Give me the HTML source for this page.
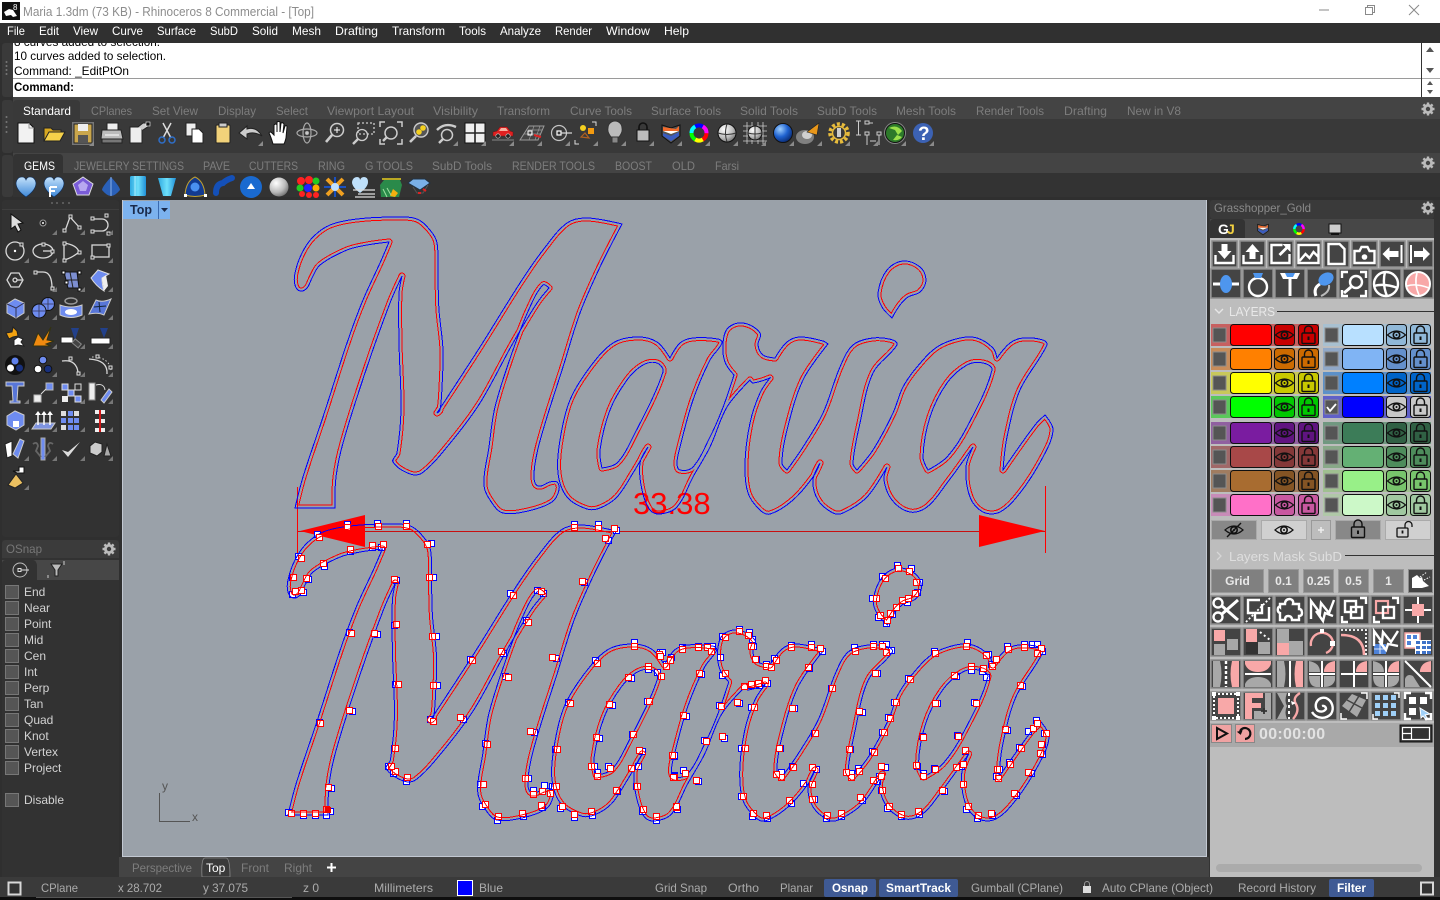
<!DOCTYPE html>
<html lang="en"><head><meta charset="utf-8"><title>Maria 1.3dm - Rhinoceros 8</title>
<style>
html,body{margin:0;padding:0;background:#2f2f2f;overflow:hidden;width:1440px;height:900px}
svg{display:block;font-family:"Liberation Sans",Arial,sans-serif;font-size:12px}
.mn{fill:#fff}.ti{fill:#7d7d7d}.ta{fill:#fff}.st{fill:#ababab}.os{fill:#d2d2d2}
.l{fill:none;stroke:#d8d8d8;stroke-width:1.3}
.w{fill:none;stroke:#fff;stroke-width:2.4}
.w3{fill:none;stroke:#fff;stroke-width:3}
.n{fill:#333;stroke:#ddd;stroke-width:1}
.nb{fill:#fff;stroke:#111;stroke-width:1}
.bl{fill:#6e8cf0;stroke:#111;stroke-width:1}
.pk{fill:#f8a8a8}.gr{fill:#a8a8a8}
.crisp{shape-rendering:crispEdges}
</style></head><body>
<svg xmlns="http://www.w3.org/2000/svg" width="1440" height="900" viewBox="0 0 1440 900">
<defs>
<marker id="mb" markerUnits="userSpaceOnUse" markerWidth="8" markerHeight="8" refX="4" refY="4"><rect x=".5" y=".5" width="6" height="6" fill="#fff" stroke="#00f" shape-rendering="crispEdges"/></marker>
<marker id="mr" markerUnits="userSpaceOnUse" markerWidth="8" markerHeight="8" refX="4" refY="4"><rect x=".5" y=".5" width="6" height="6" fill="#fff" stroke="#f00" shape-rendering="crispEdges"/></marker>
<path id="maria" class="sm" fill="none" d="M295 508 L303 477 323 417 347 343 363 300 380 263 389 242 367 245 347 250 320 265 312 278 307 288 300 291 295 285 295 273 302 253 313 237 330 225 357 219 397 217 417 219 430 230 437 243 438 277 439 310 443 350 442 387 440 410 437 413 480 347 520 283 543 250 567 223 587 218 622 224 600 267 580 313 563 367 547 417 537 453 534 477 538 486 550 482 557 482 559 490 552 502 528 511 503 513 492 503 484 485 489 447 495 407 513 350 530 307 543 285 549 288 537 303 513 343 480 403 447 447 422 473 410 474 393 462 397 453 401 410 399 343 399 293 402 276 390 303 367 367 343 443 336 477 335 508 Z
M670 358 L657 342 637 337 613 343 590 367 570 400 560 440 558 473 567 497 587 509 600 508 617 497 633 473 648 447 640 463 642 490 650 510 660 514 677 507 693 477 710 447 727 407 750 380 753 383 770 378 760 393 750 423 745 463 748 493 760 510 770 514 793 500 813 477 820 463 813 480 818 500 833 513 843 513 867 497 887 467 884 480 892 500 910 512 927 507 947 483 973 447 966 467 970 497 983 512 1000 512 1020 493 1043 457 1053 430 1045 415 1035 425 1003 470 1007 437 1020 390 1047 345 1043 340 1023 338 1010 343 997 358 993 348 977 338 960 338 937 347 917 367 903 387 893 413 873 450 857 470 853 463 860 423 873 373 897 345 893 340 873 338 853 345 840 367 823 413 803 447 787 470 782 463 787 430 803 380 828 344 823 341 800 337 787 342 775 358 775 358 763 355 758 345 760 333 743 323 728 328 723 343 725 362 734 375 734 375 722 410 710 437 693 467 680 470 677 463 680 447 693 400 710 360 722 343 718 339 693 338 680 343 Z
M663 372 L657 363 643 365 627 380 610 410 600 450 602 468 617 463 633 437 Z
M992 370 L983 363 967 365 947 383 930 417 923 457 928 470 947 457 967 427 Z
M892 318 L882 307 878 293 887 270 903 261 920 267 926 280 920 292 908 297 900 305 Z"/>
<clipPath id="inside"><use href="#maria" clip-rule="evenodd"/></clipPath>
<mask id="redm" maskUnits="userSpaceOnUse" x="0" y="200" width="1440" height="330">
<use href="#maria" stroke="#fff" stroke-width="7" stroke-linejoin="round" shape-rendering="crispEdges"/>
<use href="#maria" stroke="#000" stroke-width="5" stroke-linejoin="round" shape-rendering="crispEdges"/>
</mask>
<g id="eye"><path d="M-9 0Q0-8 9 0Q0 8-9 0z" fill="none" stroke="#111" stroke-width="1.2"/><circle r="3.2" fill="none" stroke="#111" stroke-width="1.6"/><circle r="1" fill="#111"/></g>
<g id="lk"><rect x="-6.5" y="-2" width="13" height="10.5" rx="1" fill="none" stroke="#111" stroke-width="1.4"/><path d="M-4-2v-3a4 4 0 0 1 8 0v3" fill="none" stroke="#111" stroke-width="1.4"/><path d="M0 1.5v3.5" stroke="#111" stroke-width="2"/></g>
<g id="lr"><rect width="108" height="22" fill="var(--b)"/><rect x="2" y="4" width="13" height="14" fill="#555" stroke="#8c8c8c"/><rect x="19.5" y=".5" width="41" height="21" rx="3" fill="var(--s)" stroke="#111"/><rect x="63.5" y=".5" width="20" height="21" rx="3" fill="var(--e)" stroke="#111"/><rect x="87.5" y=".5" width="20" height="21" rx="3" fill="var(--e)" stroke="#111"/><use href="#eye" x="73.5" y="11"/><use href="#lk" x="97.5" y="11"/></g>
<rect id="ba" width="25" height="26" fill="#444" stroke="#8c8c8c" stroke-width="1.5"/>
<rect id="bb" width="30" height="29" fill="#444" stroke="#8c8c8c" stroke-width="1.5"/>
<rect id="bc" width="30" height="28" fill="#444" stroke="#8c8c8c" stroke-width="1.5"/>
<g id="gear"><circle r="3.6" fill="none" stroke="#bbb" stroke-width="2.8"/><path d="M0-6.5V-4M0 4V6.5M-6.5 0H-4M4 0H6.5M-4.6-4.6L-2.8-2.8M2.8 2.8L4.6 4.6M-4.6 4.6L-2.8 2.8M2.8-2.8L4.6-4.6" stroke="#bbb" stroke-width="2.4"/></g>
<g id="wheel" fill="none" stroke-width="4"><circle r="7.5" stroke="#f00" stroke-dasharray="8 40"/><circle r="7.5" stroke="#ff0" stroke-dasharray="8 40" transform="rotate(60)"/><circle r="7.5" stroke="#0f0" stroke-dasharray="8 40" transform="rotate(120)"/><circle r="7.5" stroke="#0ff" stroke-dasharray="8 40" transform="rotate(180)"/><circle r="7.5" stroke="#00f" stroke-dasharray="8 40" transform="rotate(240)"/><circle r="7.5" stroke="#f0f" stroke-dasharray="8 40" transform="rotate(300)"/></g>
<g id="sec"><path d="M-9-8L0-5 9-8V3L0 10-9 3z" fill="#555" stroke="#111"/><path d="M-8-6L5-4 8-7 8-2-8-2z" fill="#f26a2a"/><path d="M-8-2L8-2 0 1z" fill="#fff"/><path d="M-8 0L0 3 8-1V3L0 8-8 3z" fill="#3a5cc0"/></g>
<radialGradient id="gb" cx=".35" cy=".3" r=".8"><stop offset="0" stop-color="#9fd0ff"/><stop offset=".5" stop-color="#1f62d0"/><stop offset="1" stop-color="#062060"/></radialGradient>
<radialGradient id="gs" cx=".35" cy=".3" r=".8"><stop offset="0" stop-color="#fff"/><stop offset=".6" stop-color="#bbb"/><stop offset="1" stop-color="#666"/></radialGradient>
<linearGradient id="gh" x1="0" y1="0" x2="0" y2="1"><stop offset="0" stop-color="#c4e2fb"/><stop offset="1" stop-color="#3d88d8"/></linearGradient>
<linearGradient id="gc" x1="0" y1="0" x2="1" y2="0"><stop offset="0" stop-color="#2ea8e0"/><stop offset=".5" stop-color="#6fe0fa"/><stop offset="1" stop-color="#2090d8"/></linearGradient>
</defs>

<rect width="1440" height="900" fill="#2f2f2f"/>
<!-- title -->
<rect width="1440" height="23" fill="#fff"/>
<rect x="2" y="2" width="18" height="18" fill="#111"/><path d="M4 12l5-3 4 1 4 6-4 1-2-2-5 1z" fill="#fff"/><text x="13" y="10" fill="#fff" font-size="8">8</text>
<text x="23" y="16" fill="#8d8d8d" font-size="12.5" textLength="291" lengthAdjust="spacingAndGlyphs">Maria 1.3dm (73 KB) - Rhinoceros 8 Commercial - [Top]</text>
<path d="M1319 10h10" stroke="#8a8a8a"/><path d="M1365.5 7.5h7v7h-7zM1367.5 7.5v-2h7v7h-2" fill="none" stroke="#8a8a8a"/><path d="M1409 5l10 10M1419 5l-10 10" stroke="#8a8a8a"/>
<!-- menu -->
<rect y="23" width="1440" height="20" fill="#303030"/>
<g class="mn" lengthAdjust="spacingAndGlyphs"><text x="7" y="35" textLength="18" lengthAdjust="spacingAndGlyphs">File</text><text x="39" y="35" textLength="20" lengthAdjust="spacingAndGlyphs">Edit</text><text x="73" y="35" textLength="25" lengthAdjust="spacingAndGlyphs">View</text><text x="112" y="35" textLength="31" lengthAdjust="spacingAndGlyphs">Curve</text><text x="157" y="35" textLength="39" lengthAdjust="spacingAndGlyphs">Surface</text><text x="210" y="35" textLength="28" lengthAdjust="spacingAndGlyphs">SubD</text><text x="252" y="35" textLength="26" lengthAdjust="spacingAndGlyphs">Solid</text><text x="292" y="35" textLength="29" lengthAdjust="spacingAndGlyphs">Mesh</text><text x="335" y="35" textLength="43" lengthAdjust="spacingAndGlyphs">Drafting</text><text x="392" y="35" textLength="53" lengthAdjust="spacingAndGlyphs">Transform</text><text x="459" y="35" textLength="27" lengthAdjust="spacingAndGlyphs">Tools</text><text x="500" y="35" textLength="41" lengthAdjust="spacingAndGlyphs">Analyze</text><text x="555" y="35" textLength="37" lengthAdjust="spacingAndGlyphs">Render</text><text x="606" y="35" textLength="44" lengthAdjust="spacingAndGlyphs">Window</text><text x="664" y="35" textLength="25" lengthAdjust="spacingAndGlyphs">Help</text></g>
<!-- command -->
<rect x="2" y="43" width="11" height="54" rx="3" fill="#3a3a3a"/>
<g fill="#777"><circle cx="6.500" cy="62" r="1"/><circle cx="6.500" cy="66" r="1"/><circle cx="6.500" cy="70" r="1"/><circle cx="6.500" cy="74" r="1"/></g>
<rect x="13" y="43" width="1427" height="54" fill="#fff"/>
<rect x="13" y="78" width="1408" height="1" fill="#9a9a9a"/>
<svg x="13" y="43" width="1408" height="9" overflow="hidden"><text x="1" y="3" fill="#000" textLength="146" lengthAdjust="spacingAndGlyphs">8 curves added to selection.</text></svg>
<text x="14" y="60" fill="#000" textLength="152" lengthAdjust="spacingAndGlyphs">10 curves added to selection.</text>
<text x="14" y="75" fill="#000" textLength="115" lengthAdjust="spacingAndGlyphs">Command: _EditPtOn</text>
<text x="14" y="91" fill="#000" font-weight="bold" textLength="60" lengthAdjust="spacingAndGlyphs">Command:</text>
<rect x="1421" y="43" width="1" height="54" fill="#333"/>
<path d="M1426 52l4-5 4 5zM1426 68l4 5 4-5zM1427 85l3-4 3 4zM1427 90l3 4 3-4z" fill="#555"/>
<rect x="1422" y="78" width="18" height="1" fill="#aaa"/>
<!-- toolbar 1 -->
<rect x="2" y="100" width="11" height="53" rx="3" fill="#3a3a3a"/>
<rect x="13" y="97" width="1427" height="22" fill="#444"/>
<rect x="13" y="119" width="1427" height="34" fill="#393939"/>
<path d="M13 119V104q0-4 4-4H76q4 0 4 4V119z" fill="#393939"/>
<g fill="#777"><circle cx="6.500" cy="117" r="1"/><circle cx="6.500" cy="122" r="1"/><circle cx="6.500" cy="127" r="1"/><circle cx="6.500" cy="132" r="1"/><circle cx="6.500" cy="170" r="1"/><circle cx="6.500" cy="175" r="1"/><circle cx="6.500" cy="180" r="1"/><circle cx="6.500" cy="185" r="1"/></g>
<text x="23" y="115" class="ta" textLength="48" lengthAdjust="spacingAndGlyphs">Standard</text>
<g class="ti"><text x="91" y="115" textLength="41" lengthAdjust="spacingAndGlyphs">CPlanes</text><text x="152" y="115" textLength="46" lengthAdjust="spacingAndGlyphs">Set View</text><text x="218" y="115" textLength="38" lengthAdjust="spacingAndGlyphs">Display</text><text x="276" y="115" textLength="32" lengthAdjust="spacingAndGlyphs">Select</text><text x="327" y="115" textLength="87" lengthAdjust="spacingAndGlyphs">Viewport Layout</text><text x="433" y="115" textLength="45" lengthAdjust="spacingAndGlyphs">Visibility</text><text x="497" y="115" textLength="53" lengthAdjust="spacingAndGlyphs">Transform</text><text x="570" y="115" textLength="62" lengthAdjust="spacingAndGlyphs">Curve Tools</text><text x="651" y="115" textLength="70" lengthAdjust="spacingAndGlyphs">Surface Tools</text><text x="740" y="115" textLength="58" lengthAdjust="spacingAndGlyphs">Solid Tools</text><text x="817" y="115" textLength="60" lengthAdjust="spacingAndGlyphs">SubD Tools</text><text x="896" y="115" textLength="60" lengthAdjust="spacingAndGlyphs">Mesh Tools</text><text x="976" y="115" textLength="68" lengthAdjust="spacingAndGlyphs">Render Tools</text><text x="1064" y="115" textLength="43" lengthAdjust="spacingAndGlyphs">Drafting</text><text x="1127" y="115" textLength="54" lengthAdjust="spacingAndGlyphs">New in V8</text></g>
<use href="#gear" x="1428" y="109"/>
<!-- toolbar 2 -->
<rect x="2" y="155" width="11" height="42" rx="3" fill="#3a3a3a"/>
<rect x="13" y="153" width="1427" height="20" fill="#444"/>
<rect x="13" y="173" width="1427" height="24" fill="#333"/>
<path d="M13 173V158q0-4 4-4H59q4 0 4 4V173z" fill="#333"/>
<text x="24" y="170" class="ta" textLength="31" lengthAdjust="spacingAndGlyphs">GEMS</text>
<g class="ti"><text x="74" y="170" textLength="110" lengthAdjust="spacingAndGlyphs">JEWELERY SETTINGS</text><text x="203" y="170" textLength="27" lengthAdjust="spacingAndGlyphs">PAVE</text><text x="249" y="170" textLength="49" lengthAdjust="spacingAndGlyphs">CUTTERS</text><text x="318" y="170" textLength="27" lengthAdjust="spacingAndGlyphs">RING</text><text x="365" y="170" textLength="48" lengthAdjust="spacingAndGlyphs">G TOOLS</text><text x="432" y="170" textLength="60" lengthAdjust="spacingAndGlyphs">SubD Tools</text><text x="512" y="170" textLength="83" lengthAdjust="spacingAndGlyphs">RENDER TOOLS</text><text x="615" y="170" textLength="37" lengthAdjust="spacingAndGlyphs">BOOST</text><text x="672" y="170" textLength="23" lengthAdjust="spacingAndGlyphs">OLD</text><text x="715" y="170" textLength="24" lengthAdjust="spacingAndGlyphs">Farsi</text></g>
<use href="#gear" x="1428" y="163"/>

<!-- row 1 icons -->
<g transform="translate(26,133)"><path d="M-8-10H3L8-5V10H-8z" fill="#f2f2f2" stroke="#111"/><path d="M3-10V-5H8" fill="none" stroke="#999"/></g>
<g transform="translate(54,133)"><path d="M-10 8V-5H-3L-1-3H7V-1" fill="#d8a820" stroke="#222"/><path d="M-10 8L-5-1H11L6 8z" fill="#f6d24a" stroke="#222"/></g>
<g transform="translate(83,133)"><rect x="-11" y="-11" width="22" height="23" fill="#777"/><rect x="-9" y="-9" width="18" height="19" fill="#c9a64c" stroke="#222"/><rect x="-5" y="-9" width="10" height="7" fill="#eee"/><rect x="-5" y="2" width="10" height="8" fill="#555"/></g>
<g transform="translate(112,133)"><path d="M-5-10H6V-3H-5z" fill="#eee" stroke="#222"/><path d="M-10-3H9L11 6H-11z" fill="#bbb" stroke="#222"/><rect x="-10" y="6" width="20" height="4" fill="#777" stroke="#222"/><path d="M-7 2H7" stroke="#fff"/></g>
<g transform="translate(139,133)"><path d="M-9-6H3V10H-9z" fill="#eee" stroke="#222"/><path d="M-1-6L4-10H10V-7L4-3" fill="#ccc" stroke="#222"/><rect x="7" y="-11" width="4" height="4" fill="#111" stroke="#fff" stroke-width=".6"/></g>
<g transform="translate(167,133)" fill="none" stroke-width="1.5"><path d="M-4-10L4 5M4-10L-4 5" stroke="#ddd"/><circle cx="-5" cy="7" r="3" stroke="#2e6ec8"/><circle cx="5" cy="7" r="3" stroke="#2e6ec8"/></g>
<g transform="translate(195,133)"><path d="M-9-10H1V3H-9z" fill="#eee" stroke="#222"/><path d="M-3-4H4L8 0V10H-3z" fill="#fff" stroke="#222"/></g>
<g transform="translate(223,133)"><rect x="-7" y="-8" width="14" height="18" rx="1" fill="#f2d27a" stroke="#222"/><rect x="-4" y="-10" width="8" height="4" fill="#ccc" stroke="#222"/></g>
<g transform="translate(251,133)"><path d="M-12 0L-4-7V-4Q5-7 11 3Q3-2-4 1V6z" fill="#ccc" stroke="#222"/></g>
<g transform="translate(279,133)"><path d="M-6 11Q-8 4-10 0Q-9-2-7 0L-5 2V-8Q-3-10-2-8L-2-1V-11Q0-12 1-11V-1L2-10Q4-11 5-9L4 0L6-7Q8-8 8-6L7 5Q6 9 5 11z" fill="#fff" stroke="#111"/></g>
<g transform="translate(307,133)" fill="none" stroke="#aaa" stroke-width="1.2"><ellipse rx="10" ry="4"/><ellipse rx="4" ry="10"/><circle r="1.500" fill="#ddd"/></g>
<g transform="translate(335,133)" fill="none" stroke="#ccc" stroke-width="1.5"><circle cx="2" cy="-3" r="6.500"/><path d="M-3 2L-9 9" stroke-width="2.6"/><path d="M-1-3h6M2-6v6" stroke="#fff" stroke-width="1"/></g>
<g transform="translate(363,133)" fill="none" stroke="#ccc" stroke-width="1.3"><circle cx="-1" cy="2" r="5.500"/><path d="M-5 6L-10 11" stroke-width="2.4"/><rect x="-5" y="-10" width="16" height="11" stroke-dasharray="2 2"/></g>
<g transform="translate(391,133)" fill="none" stroke="#ccc" stroke-width="1.5"><circle r="6"/><path d="M-4 4L-8 8" stroke-width="2.4"/><path d="M-11-6V-11H-6M6-11H11V-6M11 6V11H6M-6 11H-11V6"/></g>
<g transform="translate(419,133)"><circle cx="2" cy="-3" r="7" fill="#555" stroke="#ccc" stroke-width="1.4"/><circle cx="4" cy="-5" r="2.800" fill="#f4d020"/><circle cx="0" cy="-1" r="2.800" fill="#f4d020"/><path d="M-3 3L-9 9" stroke="#ccc" stroke-width="2.6"/></g>
<g transform="translate(447,133)" fill="none" stroke="#ccc" stroke-width="1.5"><circle cy="2" r="5.500"/><path d="M-4 6L-8 10" stroke-width="2.4"/><path d="M-10-3Q-2-11 9-6" stroke-width="2.400"/></g>
<g transform="translate(475,133)"><rect x="-10" y="-10" width="20" height="20" fill="#eee" stroke="#111"/><path d="M0-10V10M-10 0H10" stroke="#222" stroke-width="1.6"/></g>
<g transform="translate(503,133)"><path d="M-10 3V-1L-6-2-3-6H4L7-2 10-1V3z" fill="#e02020" stroke="#701010" stroke-width=".5"/><path d="M-2-5H3L5-2H-4z" fill="#f7b0a0"/><circle cx="-5" cy="3" r="2.200" fill="#222" stroke="#ccc" stroke-width=".6"/><circle cx="5" cy="3" r="2.200" fill="#222" stroke="#ccc" stroke-width=".6"/><path d="M-11 7H11" stroke="#888"/></g>
<g transform="translate(532,133)"><path d="M-12 7L-3-7H12L6 7z" fill="#444" stroke="#999"/><path d="M-8 1H9M-4-3H10M-3 7L2-7M3 7L8-7" stroke="#999" stroke-width=".7"/><rect x="-4" y="-2" width="4" height="4" fill="none" stroke="#fff"/><path d="M2 2L9 4" stroke="#d22" stroke-width="2"/></g>
<g transform="translate(559,133)" fill="none" stroke="#c4c4c4" stroke-width="1.2"><circle r="7.500"/><rect x="-2" y="-2" width="4" height="4" stroke="#fff"/><path d="M2 0H13" stroke="#ddd"/></g>
<g transform="translate(587,133)"><circle cx="-4" cy="-5" r="3" fill="#f4d020"/><rect x="1" y="-5" width="6" height="6" fill="#f29a10"/><path d="M-6 4L-2 0 2 5z" fill="none" stroke="#b06020" stroke-width="1.200"/><path d="M5-11H9V-7M-12 7V11H-8" fill="none" stroke="#ddd"/></g>
<g transform="translate(615,133)"><path d="M-4 4Q-8-1-7-5A7 7 0 0 1 7-5Q8-1 4 4z" fill="#bbb" stroke="#333"/><rect x="-3" y="4" width="6" height="6" fill="#888" stroke="#333"/></g>
<g transform="translate(643,133)"><rect x="-6" y="-3" width="12" height="11" fill="#bbb" stroke="#111"/><path d="M-4-3V-6A4 4 0 0 1 4-6V-3" fill="none" stroke="#111" stroke-width="1.600"/></g>
<use href="#sec" x="671" y="133"/><use href="#wheel" x="699" y="133"/>
<g transform="translate(727,133)"><circle r="9" fill="url(#gs)" stroke="#111"/><path d="M-9 0Q0 3 9 0M0-9Q-3 0 0 9" fill="none" stroke="#333"/></g>
<g transform="translate(755,133)"><path d="M-12-7H12M-12-2H12M-12 3H12M-12 8H12M-8-11V11M-3-11V11M3-11V11M8-11V11" stroke="#ccc" stroke-width=".8"/><circle r="7" fill="url(#gs)" stroke="#111"/><path d="M-7 0Q0 2 7 0M0-7V7" fill="none" stroke="#333"/></g>
<g transform="translate(783,133)"><circle r="9.500" fill="url(#gb)" stroke="#111"/></g>
<g transform="translate(811,133)"><ellipse cx="-6" cy="4" rx="9" ry="7" fill="#bbb" opacity=".55"/><ellipse cx="-4" cy="2" rx="5" ry="4" fill="#e4e4e4" opacity=".8"/><path d="M-4-1L8-10 6 2z" fill="#e8961a" stroke="#222" stroke-width=".6"/></g>
<g transform="translate(839,133)"><circle r="9" fill="none" stroke="#e8bc3c" stroke-width="3.600" stroke-dasharray="3 2"/><circle r="6.500" fill="none" stroke="#e8bc3c" stroke-width="1.500"/><rect x="-2" y="-5" width="4" height="9" fill="#ccc"/></g>
<g transform="translate(867,133)" fill="none" stroke="#ccc"><rect x="-2" y="-12" width="4" height="3"/><rect x="-2" y="-1" width="4" height="3"/><rect x="10" y="-1" width="4" height="3"/><path d="M-11-12H-6M-11 2H-6M-8.500-12V2M2-10H6M0 2V12M12 2V12M3 8H9"/></g>
<g transform="translate(895,133)"><circle r="10.500" fill="#111" stroke="#888"/><circle r="9" fill="#2d7a2a"/><path d="M-6-5Q2-9 7-2L3 2 0-3zM-2 7L2 2 7 4Q4 8-2 7z" fill="#9be04a"/></g>
<g transform="translate(923,133)"><circle r="10" fill="#3c62b4"/><text x="-5" y="7" font-size="19" font-weight="bold" fill="#fff">?</text></g>
<path d="M89 146h5v-5zM258 146h5v-5zM453 146h5v-5zM481 146h5v-5zM509 146h5v-5zM537 146h5v-5zM565 146h5v-5zM593 146h5v-5zM621 146h5v-5zM649 146h5v-5zM677 146h5v-5zM705 146h5v-5zM733 146h5v-5zM761 146h5v-5zM789 146h5v-5zM817 146h5v-5zM845 146h5v-5zM873 146h5v-5zM901 146h5v-5zM929 146h5v-5z" fill="#8a8a8a"/>

<!-- row 2 icons -->
<g fill="url(#gh)" stroke="#0c2f60" stroke-width=".6">
<path d="M26 197Q16 190 16 183Q17 177 22 177Q25 177 26 180Q27 177 30 177Q35 177 36 183Q36 190 26 197z"/>
<path d="M54 197Q44 190 44 183Q45 177 50 177Q53 177 54 180Q55 177 58 177Q63 177 64 183Q64 190 54 197z"/>
</g>
<path d="M50 187h7M50 187v10M50 191h5" fill="none" stroke="#fff" stroke-width="2"/>
<path d="M83 177L93 184 89 195H77L73 184z" fill="#7a5cd8" stroke="#ddd"/><path d="M83 181L88 185 86 191H80L78 185z" fill="#b8a8f0"/>
<path d="M111 177Q120 187 120 190Q115 196 111 196Q107 196 102 190Q102 187 111 177z" fill="#2a60b8"/><path d="M111 177V196" stroke="#8ab0e8" stroke-width="1"/>
<rect x="130" y="176" width="16" height="20" rx="1.500" fill="url(#gc)"/><path d="M135 176V196" stroke="#aef" stroke-width="1"/>
<path d="M158 178H176L171 196H163z" fill="url(#gc)"/>
<g transform="translate(195,187)"><path d="M0-10Q9-6 10 8Q0 11-10 8Q-9-6 0-10z" fill="#123a90" stroke="#c0a030"/><circle r="4.500" fill="#4a90f0"/><rect x="-11" y="7" width="3" height="3" fill="#fff"/><rect x="9" y="7" width="3" height="3" fill="#fff"/></g>
<path d="M216 193Q216 184 223 183Q226 180 232 178" fill="none" stroke="#1450b8" stroke-width="6" stroke-linecap="round"/>
<g transform="translate(251,187)"><circle r="11" fill="#1a6ad0"/><path d="M-4 2L0-4 4 2z" fill="#fff"/></g>
<circle cx="279" cy="187" r="9.500" fill="url(#gs)"/>
<g><circle cx="301" cy="181" r="4" fill="#f22"/><circle cx="309" cy="180" r="4" fill="#f22"/><circle cx="316" cy="181" r="3.500" fill="#2c2"/><circle cx="300" cy="188" r="3.500" fill="#2c2"/><circle cx="308" cy="188" r="4" fill="#22f"/><circle cx="316" cy="188" r="3.500" fill="#fa0"/><circle cx="302" cy="194" r="3" fill="#f22"/><circle cx="309" cy="195" r="3" fill="#f22"/><circle cx="316" cy="195" r="3" fill="#f22"/></g>
<g transform="translate(335,187)"><path d="M-8-8L-2-2M8-8L2-2M-8 8L-2 2M8 8L2 2" stroke="#f0a020" stroke-width="4"/><path d="M-11 0H11M0-10V10" stroke="#1a50c0" stroke-width="2"/><circle r="4" fill="#bfe0ff"/></g>
<g transform="translate(363,187)"><path d="M-3 6Q-11 0-11-5Q-10-10-6-10Q-3-10-3-7Q-2-10 1-10Q5-10 5-5Q5 0-3 6z" fill="#bfe0fa"/><path d="M-10 3H12M-5 7H12M-8 10H12" stroke="#ddd" stroke-width="1.200"/></g>
<g transform="translate(391,187)"><path d="M-11-2L-7-7H9L11-2 8 10H-10z" fill="#2a8a4a"/><path d="M-9-8H10" stroke="#e8d020" stroke-width="1.500"/><path d="M2 2L7 6 4 10-1 9z" fill="#f2b010"/><path d="M-8 2L-4 10M-4 1L0 8" stroke="#9de0a0"/></g>
<g transform="translate(419,187)"><path d="M-11-4L-6-8H6L11-4 1 3z" fill="#7ab0e8" stroke="#234"/><path d="M-6 0L-2 6 4 6 9-2" fill="none" stroke="#555"/><path d="M-1 6h3M4 2L7 4" stroke="#d22" stroke-width="2"/></g>

<!-- left toolbar -->
<rect x="2" y="200" width="117" height="337" rx="3" fill="#323232"/>
<rect x="2" y="209" width="117" height="1" fill="#3e3e3e"/>
<g fill="#666"><circle cx="52" cy="203" r="1"/><circle cx="57" cy="203" r="1"/><circle cx="63" cy="203" r="1"/><circle cx="69" cy="203" r="1"/></g>
<g transform="translate(15,223)"><path d="M-4-9V6L0 3 3 9 6 7 3 1 8 0z" fill="#ddd" stroke="#111"/></g>
<g transform="translate(43,223)"><circle r="3" fill="#222" stroke="#999"/><circle r="1" fill="#fff"/></g>
<g transform="translate(71,223)"><path class="l" d="M-6 8L-1-6 8 4"/><rect class="n" x="-8" y="6" width="3" height="3"/><rect class="n" x="-2" y="-8" width="3" height="3"/><rect class="n" x="7" y="3" width="3" height="3"/></g>
<g transform="translate(100,223)"><path class="l" d="M-9-4H2A6 6 0 0 1 2 8H-9"/><rect class="n" x="-9" y="-6" width="3" height="3"/><rect class="n" x="5" y="-9" width="3" height="3"/><rect class="n" x="7" y="9" width="3" height="3"/><rect class="n" x="-9" y="7" width="3" height="3"/></g>
<g transform="translate(15,251)"><circle class="l" r="9"/><circle r="1.200" fill="#fff"/><rect class="n" x="5" y="-8" width="3" height="3"/></g>
<g transform="translate(43,251)"><ellipse class="l" rx="10" ry="7"/><rect class="n" x="-1" y="-8" width="3" height="3"/><rect class="n" x="8" y="-1" width="3" height="3"/><path class="l" d="M0 0H8"/></g>
<g transform="translate(71,251)"><path class="l" d="M-7-8Q6-6 8 1Q1 7-7 9z"/><rect class="n" x="-8" y="-9" width="3" height="3"/><rect class="n" x="7" y="0" width="3" height="3"/><rect class="n" x="-8" y="8" width="3" height="3"/></g>
<g transform="translate(100,251)"><rect class="l" x="-8" y="-6" width="17" height="12"/><rect class="n" x="7" y="-7" width="3" height="3"/><rect class="n" x="-9" y="5" width="3" height="3"/></g>
<g transform="translate(15,280)"><path class="l" d="M-8 0L-4-7H4L8 0 4 7H-4z"/><circle class="l" r="2"/><path class="l" d="M2 0H7"/></g>
<g transform="translate(43,280)"><path class="l" d="M-8-8H0Q9-8 9 8" stroke-width="2"/><rect class="n" x="-9" y="-9" width="3" height="3"/><rect class="n" x="8" y="7" width="3" height="3"/></g>
<g transform="translate(71,280)"><path d="M-7-8H6L8 8-3 8z" fill="#7c8ed0" stroke="#111"/><path d="M-1-8L2 8M-6 0H8" stroke="#222"/><rect class="nb" x="-9" y="-9" width="3" height="3"/><rect class="nb" x="7" y="-9" width="3" height="3"/><rect class="nb" x="7" y="8" width="3" height="3"/><rect class="nb" x="-6" y="1" width="3" height="3"/></g>
<g transform="translate(100,280)"><path d="M-9-2L-2-10 9-6 2-2Q2 4 4 11 -4 6-9-2z" fill="#6e8cf0" stroke="#ddd"/><path d="M2-2L4 11 8 6 6-5z" fill="#eee"/></g>
<g transform="translate(15,308)"><path d="M-8-4L0-9 9-5V5L1 10-8 5z" fill="#6e8cf0" stroke="#ccc"/><path d="M-8-4L1 0 9-5M1 0V10" stroke="#335" fill="none"/></g>
<g transform="translate(43,308)"><circle cx="5" cy="-4" r="6.500" class="bl"/><circle cx="-4" cy="3" r="7" class="bl"/><path d="M-11 3H3M-4-4V10M-2-4H11M5-10V2" stroke="#335" stroke-width=".8"/></g>
<g transform="translate(71,308)"><ellipse cy="-7" rx="6" ry="3" fill="none" stroke="#999" stroke-width="1.500"/><path d="M-11-3Q0 1 11-3V7Q0 12-11 7z" fill="#6e8cf0" stroke="#ccc"/><ellipse cy="4" rx="6" ry="3" fill="#fff"/></g>
<g transform="translate(100,308)"><path d="M-11 6L-4-8Q2-5 11-9L4 7Q-2 4-11 6z" fill="#5876d8" stroke="#ccc"/><path d="M-6-1L6-2M-1-6L0 4" stroke="#123"/></g>
<g transform="translate(15,337)"><path d="M-9-4L-3-5-2-10 2-6 3-1-2 0-6 2z" fill="#f2a210" stroke="#222"/><path d="M-1 3L3 0 8 2 6 5 9 9 3 8-1 9z" fill="#fff" stroke="#222"/></g>
<g transform="translate(43,337)"><path d="M-10 9L-5-4 0 3 8-10 4 3 11 4 3 7 8 9z" fill="#f08a10" stroke="#331"/></g>
<g transform="translate(71,337)"><rect x="-10" y="0" width="12" height="6" fill="#fff" stroke="#222"/><path d="M0-9H8L4 3z" fill="#22408a"/><rect x="2" y="4" width="8" height="5" fill="#444" stroke="#888" transform="rotate(40 6 6)"/></g>
<g transform="translate(100,337)"><rect x="-9" y="1" width="19" height="6" fill="#fff" stroke="#222"/><path d="M0-9H8L4 1z" fill="#22408a"/></g>
<g transform="translate(15,365)"><circle r="10" fill="#111"/><circle cy="-4" r="3.500" fill="#5e80ec"/><circle cx="-4.500" cy="3" r="3.500" fill="#fff"/><circle cx="4.500" cy="3" r="3.500" fill="#18307c"/></g>
<g transform="translate(43,365)"><circle cy="-5" r="3.800" class="bl"/><circle cx="-5" cy="4" r="3.800" fill="#fff" stroke="#111"/><circle cx="5" cy="4" r="3.800" fill="#18307c" stroke="#111"/></g>
<g transform="translate(71,365)"><path d="M-9-4Q5-6 7 7" class="l" stroke-width="2"/><rect class="n" x="-2" y="-8" width="3" height="3"/><rect class="n" x="6" y="7" width="3" height="3"/></g>
<g transform="translate(100,365)"><path d="M-11-6Q8-5 7 9" class="l" stroke-width="2"/><path d="M-8-8Q9-8 11 5" fill="none" stroke="#ccc" stroke-dasharray="1.500 2"/><rect class="n" x="-4" y="-10" width="3" height="3"/><rect class="n" x="9" y="1" width="3" height="3"/></g>
<g transform="translate(15,392)"><path d="M-9-10H9V-6H3L2 9H5V11H-5V9H-2L-3-6H-9z" fill="#5876d8" stroke="#ccc"/></g>
<g transform="translate(43,392)"><rect x="3" y="-9" width="7" height="7" fill="#6e8cf0" stroke="#bbb"/><rect x="-9" y="3" width="7" height="7" fill="#eee" stroke="#bbb"/><path d="M-2 2L3-3" stroke="#ddd"/></g>
<g transform="translate(71,392)"><rect x="-9" y="-8" width="6" height="6" fill="#6e8cf0" stroke="#ddd"/><rect x="-3" y="-2" width="6" height="6" fill="#6e8cf0" stroke="#ddd"/><rect x="4" y="-8" width="6" height="6" fill="#333" stroke="#ddd"/><rect x="-9" y="4" width="6" height="6" fill="#eee"/><rect x="4" y="4" width="6" height="6" fill="#6e8cf0" stroke="#ddd"/></g>
<g transform="translate(100,392)"><rect x="-11" y="-9" width="6" height="17" fill="#eee" stroke="#888"/><path d="M-4-7Q4-9 5-2" fill="none" stroke="#ddd"/><path d="M1 8L9-3 12 0 4 11z" fill="#6e8cf0" stroke="#ccc"/></g>
<g transform="translate(15,420)"><path d="M-8-4L0-9 9-5V5L1 10-8 5z" fill="#6e8cf0" stroke="#ccc"/><rect x="-2" y="1" width="6" height="6" fill="#fff"/></g>
<g transform="translate(43,420)"><path d="M-11 9L-7 3H12L8 9z" fill="#7f94e0" stroke="#ccc"/><path d="M-5 5V-6M1 5V-6M7 5V-6" stroke="#fff" stroke-width="1.500"/><path d="M-8-5L-5-9-2-5zM-2-5L1-9 4-5zM4-5L7-9 10-5z" fill="#fff"/></g>
<g transform="translate(71,420)"><path d="M-10-9h5v5h-5zM3-9h5v5h-5zM-10 5h5v5h-5z" fill="#ddd"/><path d="M-3-9h5v5h-5zM-10-2h5v5h-5zM-3-2h5v5h-5zM3-2h5v5h-5zM-3 5h5v5h-5zM3 5h5v5h-5z" fill="#6e8cf0"/></g>
<g transform="translate(100,420)"><rect x="-5" y="-10" width="10" height="4" fill="#eee"/><rect x="-5" y="-1" width="10" height="4" fill="#eee"/><rect x="-5" y="8" width="10" height="4" fill="#eee"/><path d="M0-10V12" stroke="#d01818" stroke-width="2"/></g>
<g transform="translate(15,449)"><path d="M-10-5L-3-8V7L-8 9z" fill="#fff" stroke="#222"/><path d="M-2 5L5-10 9-8 3 9z" fill="#6e8cf0" stroke="#ccc"/></g>
<g transform="translate(43,449)"><rect x="-2" y="-11" width="4" height="22" fill="#6e8cf0" stroke="#aaa"/><path d="M-10-5Q-6-8-5-3L-7 2-2 8M10-5Q6-8 5-3L7 2 2 8" fill="none" stroke="#666" stroke-width="1.800"/></g>
<path d="M62 450L68 457 80 442 68 452z" fill="#ddd"/>
<g transform="translate(100,449)"><path d="M-10-3L-5-7 2-5 2 3-3 7-10 4z" fill="#ccc" stroke="#222"/><path d="M4 7L7-5 11 7z" fill="#aaa" stroke="#222"/></g>
<g transform="translate(15,478)"><path d="M-7 7L1-4 8 5 0 10z" fill="#ecc060" stroke="#222"/><path d="M-2-7H4V-11H9V-5H2z" fill="#fff" stroke="#111"/></g>
<path d="M52 235h5v-5zM80 235h5v-5zM108 235h5v-5zM24 263h5v-5zM52 263h5v-5zM80 263h5v-5zM108 263h5v-5zM52 292h5v-5zM80 292h5v-5zM108 292h5v-5zM24 320h5v-5zM52 320h5v-5zM80 320h5v-5zM108 320h5v-5zM52 349h5v-5zM80 349h5v-5zM108 349h5v-5zM52 377h5v-5zM80 377h5v-5zM108 377h5v-5zM24 404h5v-5zM52 404h5v-5zM80 404h5v-5zM108 404h5v-5zM24 432h5v-5zM52 432h5v-5zM80 432h5v-5zM108 432h5v-5zM24 461h5v-5zM52 461h5v-5zM80 461h5v-5zM108 461h5v-5zM24 490h5v-5z" fill="#777"/>

<!-- OSnap -->
<rect x="2" y="540" width="117" height="337" fill="#323232"/>
<path d="M2 558V544q0-4 4-4H115q4 0 4 4V558z" fill="#3b3b3b"/>
<text x="6" y="553" fill="#777" textLength="36" lengthAdjust="spacingAndGlyphs">OSnap</text><use href="#gear" x="109" y="549"/>
<rect x="2" y="560" width="117" height="20" fill="#474747"/>
<path d="M2 580V564q0-4 4-4H33q3 0 4 5V580z" fill="#323232"/>
<g transform="translate(20,570)"><circle r="7" fill="none" stroke="#bbb"/><rect x="-2" y="-1.500" width="3" height="3" fill="none" stroke="#ddd"/><path d="M1 0H9" stroke="#ddd"/></g>
<g transform="translate(56,570)"><path d="M-5-6H6L2 0V6H-1V0z" fill="#bbb" stroke="#222"/><path d="M-8 8V5M8-9V-5" stroke="#ccc"/></g>
<g fill="#555" stroke="#777"><rect x="5.500" y="585.500" width="13" height="13"/><rect x="5.500" y="601.500" width="13" height="13"/><rect x="5.500" y="617.500" width="13" height="13"/><rect x="5.500" y="633.500" width="13" height="13"/><rect x="5.500" y="649.500" width="13" height="13"/><rect x="5.500" y="665.500" width="13" height="13"/><rect x="5.500" y="681.500" width="13" height="13"/><rect x="5.500" y="697.500" width="13" height="13"/><rect x="5.500" y="713.500" width="13" height="13"/><rect x="5.500" y="729.500" width="13" height="13"/><rect x="5.500" y="745.500" width="13" height="13"/><rect x="5.500" y="761.500" width="13" height="13"/><rect x="5.500" y="793.500" width="13" height="13"/></g>
<g class="os"><text x="24" y="596">End</text><text x="24" y="612">Near</text><text x="24" y="628">Point</text><text x="24" y="644">Mid</text><text x="24" y="660">Cen</text><text x="24" y="676">Int</text><text x="24" y="692">Perp</text><text x="24" y="708">Tan</text><text x="24" y="724">Quad</text><text x="24" y="740">Knot</text><text x="24" y="756">Vertex</text><text x="24" y="772">Project</text><text x="24" y="804">Disable</text></g>

<!-- viewport -->
<rect x="121" y="200" width="1087" height="658" fill="#2f2f2f"/>
<rect x="122" y="200" width="1085" height="657" fill="#c2c8d2"/>
<rect x="123" y="200" width="1083" height="656" fill="#9aa1a9"/>
<rect x="123" y="201" width="47" height="18" fill="#7cb2ee"/>
<rect x="158" y="201" width="1" height="18" fill="#3a6ab0"/>
<text x="130" y="214" fill="#1a2a4a" font-weight="bold" font-size="12.500">Top</text>
<path d="M161 208h7l-3.500 4z" fill="#1a2a4a"/>
<path d="M159.500 793V821.500H190" fill="none" stroke="#555"/>
<text x="162" y="790" fill="#555">y</text><text x="192" y="821" fill="#555">x</text>

<!-- dimension -->
<g class="crisp" stroke="#f00" fill="none"><path d="M297.500 487V553M1045.500 486V553"/></g>
<path d="M298 531.500H1045" stroke="#c81010" stroke-width="1" class="crisp"/>
<path d="M300 531L365 515V547zM979 515L1045 531 979 547z" fill="#f00"/>
<text x="633" y="514" fill="#f00" font-size="31">33.38</text>

<!-- top curves -->
<g>
<rect y="200" width="1440" height="330" fill="#f00" mask="url(#redm)" clip-path="url(#inside)"/>
<use href="#maria" stroke="#00f" stroke-width="1" class="crisp"/>
</g>
<!-- bottom: blue markers -->
<path fill="none" stroke="none" style="marker:url(#mb)" d="M293 578L299 557 318 535 348 525 378 524 407 524 432 544 434 578 437 637 438 686 431 720 471 660 511 594 575 525 599 525 617 531 609 541 585 583 557 659 535 733 529 779 534 791 545 786 553 787 551 794 543 808 524 817 498 821 483 807 481 785 486 744 506 677 527 621 538 591 544 594 504 654 464 720 407 782 394 774 389 767 395 749 396 685 395 626 397 581 378 635 353 712 332 789 331 812 327 816 316 816 304 816 289 813 320 723 350 633 382 548 373 548 351 552 325 567 309 580 304 593 293 595 635 643 661 653 667 666 596 661 569 703 556 750 555 787 561 809 575 818 593 816 618 792 639 767 643 752 637 787 643 812 657 821 677 808 649 670 632 679 613 706 600 739 595 767 598 773 609 767 633 735 648 702 658 673 671 660 675 757 675 776 663 653 667 665 672 658 683 648 699 647 708 647 713 647 702 675 687 717 675 756 675 777 684 771 705 741 720 706 723 676 721 658 723 637 740 630 750 633 753 640 754 647 757 660 767 665 775 659 792 646 812 645 823 652 810 669 795 709 781 749 782 773 793 767 815 734 832 689 855 648 874 645 883 645 887 645 892 651 878 674 863 713 851 750 852 774 859 769 873 752 883 733 889 718 895 703 909 679 935 652 968 643 989 655 992 665 1008 647 1025 645 1033 645 1038 645 1043 652 1023 687 1008 731 1000 770 997 777 1010 763 1020 748 1029 732 1037 721 1045 734 1043 745 1043 755 1032 774 1017 796 993 816 978 819 967 810 964 785 962 767 966 752 957 768 945 792 920 815 902 817 888 809 882 791 880 777 886 768 878 782 863 801 842 817 827 819 815 800 813 785 817 770 804 784 792 804 768 819 753 817 742 797 742 749 752 708 768 684 760 686 752 686 740 704 725 739 699 782 678 810 972 671 983 672 987 678 957 677 938 704 923 737 918 767 924 774 935 769 958 736 975 703 898 566 912 569 920 583 918 593 908 603 897 608 893 615 887 624 879 618 873 599 883 577"/>
<g transform="matrix(1.004 0 0 1 -8.2 307)">
<use href="#maria" stroke="#00f" stroke-width="1" class="crisp"/>
</g>
<path fill="none" stroke="none" style="marker:url(#mr)" d="M294 578L302 559 320 538 348 528 379 527 407 527 428 545 430 578 433 637 434 686 434 722 473 661 514 596 575 528 599 529 615 529 606 539 583 582 553 658 531 732 526 779 534 795 543 792 557 787 551 794 542 806 523 814 499 817 486 805 484 785 488 745 509 678 529 623 542 592 502 652 461 718 408 778 396 772 392 767 396 749 399 685 397 625 395 580 375 634 350 711 329 788 327 810 316 814 304 814 292 814 321 724 352 634 384 545 373 546 351 550 324 564 307 579 302 591 296 592 635 647 660 655 667 667 598 664 571 704 558 750 557 787 563 807 575 815 592 812 617 791 632 769 640 751 638 787 644 810 657 817 677 808 649 667 629 678 610 705 597 738 592 767 598 777 611 769 634 735 650 702 662 677 671 660 673 756 675 778 661 657 667 667 671 661 683 650 699 648 708 648 712 652 700 674 684 716 673 756 674 778 686 774 707 742 722 707 726 674 726 638 740 632 749 636 752 647 756 660 767 667 772 668 777 661 792 648 812 648 821 649 809 668 793 709 780 749 782 778 777 775 794 768 816 734 833 689 856 652 874 647 883 647 887 653 876 674 860 712 850 750 852 778 847 773 860 772 875 753 885 733 891 719 897 703 911 680 936 654 967 647 987 656 993 667 997 660 1009 650 1025 648 1042 649 1038 654 1021 686 1006 730 998 770 999 779 1011 765 1022 749 1034 729 1038 724 1047 734 1042 745 1041 754 1029 773 1015 794 992 814 979 816 969 807 964 785 964 765 966 751 957 768 943 791 919 812 902 815 890 807 883 791 882 777 882 767 874 781 861 798 842 814 828 816 813 800 813 785 813 768 790 801 767 816 754 814 744 797 746 749 755 708 766 681 759 684 752 685 745 687 738 703 723 737 697 781 677 807 972 667 984 669 955 676 936 704 924 738 917 766 924 777 936 770 959 737 977 704 899 569 910 572 917 583 916 594 909 599 903 601 897 608 891 614 888 621 881 616 877 599 886 579"/>
<g transform="matrix(1.004 0 0 1 -8.2 307)">
<rect y="200" width="1440" height="330" fill="#f00" mask="url(#redm)" clip-path="url(#inside)"/>
</g>
<rect x="325" y="807" width="6" height="6" fill="#e00"/>

<!-- viewport tabs -->
<rect x="119" y="857" width="1090" height="20" fill="#444"/>
<path d="M202 877q-1-19 3-19H226q4 0 4 19z" fill="#3a3a3a" stroke="#8a8a8a" stroke-width=".8"/>
<text x="132" y="872" class="ti" textLength="60" lengthAdjust="spacingAndGlyphs">Perspective</text><text x="206" y="872" class="ta">Top</text><text x="241" y="872" class="ti" textLength="28" lengthAdjust="spacingAndGlyphs">Front</text><text x="284" y="872" class="ti" textLength="28" lengthAdjust="spacingAndGlyphs">Right</text>
<path d="M327 867.500h9M331.500 863v9" stroke="#fff" stroke-width="2"/>

<!-- right panel -->
<rect x="1209" y="200" width="231" height="677" fill="#333"/>
<rect x="1210" y="200" width="224" height="19" rx="3" fill="#3a3a3a"/>
<text x="1214" y="212" fill="#8a8a8a" textLength="97" lengthAdjust="spacingAndGlyphs">Grasshopper_Gold</text><use href="#gear" x="1428" y="208"/>
<rect x="1210" y="219" width="224" height="19" fill="#474747"/>
<path d="M1210 238V223q0-4 4-4H1241q4 0 4 4V238z" fill="#333"/>
<text x="1218" y="234" fill="#fff" font-weight="bold" font-size="14">G</text><text x="1227" y="234" fill="#f2d040" font-weight="bold" font-size="14">J</text>
<use href="#sec" transform="translate(1263,229) scale(.6)"/><use href="#wheel" transform="translate(1299,229) scale(.62)"/>
<rect x="1329" y="224" width="12" height="9" fill="#ccc" stroke="#111"/><rect x="1331" y="233" width="8" height="2" fill="#111"/>
<rect x="1210" y="238" width="224" height="639" fill="#bdbdbd"/>
<!-- row A -->
<use href="#ba" x="1212" y="241"/><use href="#ba" x="1240" y="241"/><use href="#ba" x="1268" y="241"/><use href="#ba" x="1296" y="241"/><use href="#ba" x="1324" y="241"/><use href="#ba" x="1352" y="241"/><use href="#ba" x="1380" y="241"/><use href="#ba" x="1408" y="241"/>
<g transform="translate(1224.500,254)"><path class="w" d="M-9 1V9H9V1"/><path d="M-3-10H3V-3H7L0 5-7-3H-3z" fill="#fff"/></g>
<g transform="translate(1252.500,254)"><path class="w" d="M-9 1V9H9V1"/><path d="M-3 5H3V-2H7L0-10-7-2H-3z" fill="#fff"/></g>
<g transform="translate(1280.500,254)"><path class="w" d="M2-9H-9V9H9V0"/><path d="M-2 0L5-7 2-10H10V-2L7-5 0 2z" fill="#fff"/></g>
<g transform="translate(1308.500,254)"><rect class="w" x="-10" y="-9" width="20" height="18"/><path class="w" d="M-9 7L-3 0 1 4 5-2 10 3" stroke-width="1.600"/></g>
<g transform="translate(1336.500,254)"><path class="w" d="M-8-10H3L8-5V10H-8z"/></g>
<g transform="translate(1364.500,254)"><path class="w" d="M-10-3H-5L-3-7H3L5-3H10V9H-10z"/><circle r="2.800" cy="3" fill="#fff"/></g>
<g transform="translate(1392.500,254)"><path d="M-10 0L-3-7V-3H6V3H-3V7z" fill="#fff"/><path d="M9-9V9" stroke="#fff" stroke-width="2"/></g>
<g transform="translate(1420,254)"><path d="M10 0L3-7V-3H-6V3H3V7z" fill="#fff"/><path d="M-9-9V9" stroke="#fff" stroke-width="2"/></g>
<!-- row B -->
<use href="#bb" x="1211" y="269"/><use href="#bb" x="1243" y="269"/><use href="#bb" x="1275" y="269"/><use href="#bb" x="1307" y="269"/><use href="#bb" x="1339" y="269"/><use href="#bb" x="1371" y="269"/><use href="#bb" x="1403" y="269"/>
<g transform="translate(1226,284)"><path d="M-13 0H13" stroke="#fff" stroke-width="3"/><ellipse rx="6" ry="9" fill="#4e96ee"/></g>
<g transform="translate(1258,284)"><circle cy="3" r="9" class="w"/><path d="M-5-11H5L3-6H-3z" fill="#4e96ee"/></g>
<g transform="translate(1290,284)"><path d="M0-6V12" class="w3"/><path d="M-10-11H10L7-5H-7z" fill="#fff"/><path d="M-5-11H5L3-7H-3z" fill="#4e96ee"/></g>
<g transform="translate(1322,284)"><path d="M-6 12Q-9 4-2 0" class="w3"/><path d="M-1 12Q8 8 7 1" fill="none" stroke="#bbb" stroke-width="2"/><ellipse cx="4" cy="-5" rx="8" ry="6" fill="#4e96ee" transform="rotate(-30 4 -5)"/></g>
<g transform="translate(1354,284)"><circle cx="2" cy="-2" r="6" class="w"/><path d="M-3 3L-10 9" class="w3"/><path class="w" d="M-12-6V-12H-6M6-12H12V-6M12 6V12H6M-6 12H-12V6"/></g>
<g transform="translate(1386,284)"><circle r="12" class="w"/><path d="M-12 2Q-2-1 12 4M-1-12Q-4 0 1 12" class="w" stroke-width="1.600"/></g>
<g transform="translate(1418,284)"><circle r="12" fill="#f8a8a8" stroke="#fff" stroke-width="2"/><path d="M-11 2Q-2-1 11 4M-1-11Q-4 0 1 11" fill="none" stroke="#fff" stroke-width="1.600"/></g>
<!-- layers heading -->
<path d="M1215 309l4 4 4-4" fill="none" stroke="#e6e6e6" stroke-width="1.400"/>
<text x="1229" y="316" fill="#e8e8e8" font-size="13" textLength="46" lengthAdjust="spacingAndGlyphs">LAYERS</text>
<rect x="1277" y="311" width="157" height="1" fill="#333"/>
<use href="#lr" x="1211" y="324" style="--b:#c76060;--s:#f00;--e:#c80000"/>
<use href="#lr" x="1211" y="348" style="--b:#c88c5a;--s:#ff8000;--e:#cc6a00"/>
<use href="#lr" x="1211" y="372" style="--b:#c8c85a;--s:#ff0;--e:#c8c800"/>
<use href="#lr" x="1211" y="396" style="--b:#5ac85a;--s:#0f0;--e:#00c800"/>
<use href="#lr" x="1211" y="422" style="--b:#9060a0;--s:#7a1ca0;--e:#601480"/>
<use href="#lr" x="1211" y="446" style="--b:#a06868;--s:#a84848;--e:#843838"/>
<use href="#lr" x="1211" y="470" style="--b:#a07c60;--s:#a86c30;--e:#845424"/>
<use href="#lr" x="1211" y="494" style="--b:#c88cb8;--s:#ff70c8;--e:#c858a0"/>
<use href="#lr" x="1323" y="324" style="--b:#a8c0d0;--s:#b8e0ff;--e:#90b8d8"/>
<use href="#lr" x="1323" y="348" style="--b:#90a8c8;--s:#80b4f4;--e:#6490cc"/>
<use href="#lr" x="1323" y="372" style="--b:#5c90c8;--s:#0080ff;--e:#0064c8"/>
<use href="#lr" x="1323" y="396" style="--b:#6060c8;--s:#00f;--e:#c8c8c8"/>
<use href="#lr" x="1323" y="422" style="--b:#709880;--s:#3c7c58;--e:#306044"/>
<use href="#lr" x="1323" y="446" style="--b:#88a888;--s:#64b074;--e:#4e8c5c"/>
<use href="#lr" x="1323" y="470" style="--b:#a0c090;--s:#98f088;--e:#78c46c"/>
<use href="#lr" x="1323" y="494" style="--b:#b0c8a8;--s:#ccf8c8;--e:#a0c8a0"/>
<path d="M1327 407l3 4 6-7" fill="none" stroke="#fff" stroke-width="1.800"/>
<!-- vis buttons -->
<rect x="1211.500" y="520.500" width="45" height="19" fill="#888" stroke="#aaa"/><rect x="1261.500" y="520.500" width="45" height="19" fill="#d0d0d0" stroke="#aaa"/><rect x="1311.500" y="520.500" width="19" height="19" fill="#bdbdbd" stroke="#999"/><rect x="1335.500" y="520.500" width="45" height="19" fill="#888" stroke="#aaa"/><rect x="1385.500" y="520.500" width="45" height="19" fill="#d0d0d0" stroke="#aaa"/>
<use href="#eye" x="1234" y="530"/><path d="M1227 537L1241 523" stroke="#111" stroke-width="1.400"/><use href="#eye" x="1284" y="530"/>
<path d="M1318 530h6M1321 527v6" stroke="#eee" stroke-width="1.500"/>
<use href="#lk" x="1358" y="529"/>
<g transform="translate(1403,532)"><rect x="-6" y="-4" width="11" height="9" rx="1" fill="none" stroke="#111" stroke-width="1.300"/><path d="M2-4V-7A3.500 3.500 0 0 1 9-7V-5" fill="none" stroke="#111" stroke-width="1.300"/><path d="M-.5-1.500v3" stroke="#111" stroke-width="1.800"/></g>
<!-- mask section -->
<path d="M1217 552l4 4-4 4" fill="none" stroke="#d6d6d6" stroke-width="1.300"/>
<text x="1229" y="561" fill="#dedede" font-size="13" textLength="113" lengthAdjust="spacingAndGlyphs">Layers Mask SubD</text>
<rect x="1345" y="555" width="89" height="1" fill="#333"/>
<g fill="#808080" stroke="#9a9a9a"><rect x="1211.500" y="569.500" width="52" height="23"/><rect x="1268.500" y="569.500" width="30" height="23"/><rect x="1303.500" y="569.500" width="30" height="23"/><rect x="1338.500" y="569.500" width="30" height="23"/><rect x="1373.500" y="569.500" width="30" height="23"/></g>
<rect x="1408.500" y="569.500" width="24" height="23" fill="#444" stroke="#8c8c8c"/>
<path d="M1412 588V578l5-3 3 3 2-1 1 4 6 5-7 2z" fill="#fff"/><path d="M1420 577l7-5M1424 580l6-3" stroke="#fff" stroke-dasharray="1.500 1.500"/>
<g fill="#e8e8e8" font-weight="bold" text-anchor="middle" font-size="12"><text x="1237.500" y="585">Grid</text><text x="1283.500" y="585">0.1</text><text x="1318.500" y="585">0.25</text><text x="1353.500" y="585">0.5</text><text x="1388.500" y="585">1</text></g>
<!-- grid 7x4 -->
<use href="#bc" x="1211" y="596"/><use href="#bc" x="1243" y="596"/><use href="#bc" x="1275" y="596"/><use href="#bc" x="1307" y="596"/><use href="#bc" x="1339" y="596"/><use href="#bc" x="1371" y="596"/><use href="#bc" x="1403" y="596"/>
<use href="#bc" x="1211" y="628"/><use href="#bc" x="1243" y="628"/><use href="#bc" x="1275" y="628"/><use href="#bc" x="1307" y="628"/><use href="#bc" x="1339" y="628"/><use href="#bc" x="1371" y="628"/><use href="#bc" x="1403" y="628"/>
<use href="#bc" x="1211" y="660"/><use href="#bc" x="1243" y="660"/><use href="#bc" x="1275" y="660"/><use href="#bc" x="1307" y="660"/><use href="#bc" x="1339" y="660"/><use href="#bc" x="1371" y="660"/><use href="#bc" x="1403" y="660"/>
<use href="#bc" x="1211" y="692"/><use href="#bc" x="1243" y="692"/><use href="#bc" x="1275" y="692"/><use href="#bc" x="1307" y="692"/><use href="#bc" x="1339" y="692"/><use href="#bc" x="1371" y="692"/><use href="#bc" x="1403" y="692"/>
<!-- row 1 -->
<g transform="translate(1226,610)"><circle cx="-8" cy="-7" r="4.500" class="w"/><circle cx="-8" cy="7" r="4.500" class="w"/><path d="M-4-4L12 10M-4 4L12-10" class="w3" stroke-width="4"/></g>
<g transform="translate(1258,610)"><path class="w" d="M2-10H-10V3H4V-6"/><path class="w" d="M-3 3V10H11V-3"/><path d="M-12 12L12-12" stroke="#fff" stroke-width="1.800" stroke-dasharray="2 2"/></g>
<g transform="translate(1290,610)"><path class="w" d="M-10-6H-5Q-5-11 0-11Q4-10 3-6H9V-1Q12-1 12 3Q12 6 9 6V10H2Q2 6-2 6Q-5 6-5 10H-10V3Q-13 2-12-2Q-11-4-10-3z"/></g>
<g transform="translate(1322,610)"><path class="w" d="M-11 9V-9L-2 3-1-7 7 3 12-10M-6 1L1 11 3 3 11 6"/></g>
<g transform="translate(1354,610)"><rect class="w" x="-9" y="-9" width="11" height="11"/><rect class="w" x="-3" y="-3" width="11" height="11"/><path class="w" d="M6-12H12V-6M-12 6V12H-6"/></g>
<g transform="translate(1386,610)"><rect x="-10" y="-9" width="12" height="12" fill="none" stroke="#f8a8a8" stroke-width="2.200"/><rect class="w" x="-3" y="-3" width="11" height="11"/><path class="w" d="M6-12H12V-6M-12 6V12H-6"/></g>
<g transform="translate(1418,610)"><rect class="pk" x="-6" y="-6" width="12" height="12"/><path d="M-13 0H-6M6 0H13M0-13V-6M0 6V13" stroke="#fff" stroke-width="2"/></g>
<!-- row 2 -->
<g transform="translate(1226,642)"><rect class="pk" x="-12" y="-12" width="11" height="11"/><rect class="gr" x="1" y="-3" width="11" height="11"/><rect class="gr" x="-12" y="2" width="11" height="11"/></g>
<g transform="translate(1258,642)"><rect class="pk" x="-12" y="-13" width="11" height="13"/><rect class="gr" x="0" y="0" width="12" height="12"/><rect x="-12" y="0" width="12" height="12" fill="#333"/><path d="M2-10L12-2" stroke="#fff" stroke-width="2" stroke-dasharray="2 3"/></g>
<g transform="translate(1290,642)"><path class="gr" d="M-13-13H13V13H-13z"/><path d="M-1-13H13V-1H-1z" fill="#444"/><rect class="pk" x="-13" y="1" width="12" height="12"/></g>
<g transform="translate(1322,642)"><path d="M-11 4A11 11 0 0 1 11 0" fill="none" stroke="#f8a8a8" stroke-width="2.400"/><path d="M11 0A11 11 0 0 1 4 11" fill="none" stroke="#f8a8a8" stroke-width="2.400"/><rect x="-2" y="-13" width="4" height="4" fill="#fff"/><rect x="8" y="-1" width="5" height="5" fill="#fff"/></g>
<g transform="translate(1354,642)"><path d="M-13-7Q10-7 10 13" fill="none" stroke="#f8a8a8" stroke-width="2.600"/><path d="M-13-12H12V13" fill="none" stroke="#fff" stroke-width="1.800" stroke-dasharray="2 2"/></g>
<g transform="translate(1386,642)"><rect x="-12" y="2" width="12" height="10" fill="#4e82d8"/><path d="M-6 2V12M-12 7H0" stroke="#fff" stroke-width=".8"/><path class="w" d="M-12 4V-11L-4 0-3-10 5 0 12-11M-7-1L0 8 2 2 12 4"/></g>
<g transform="translate(1418,642)"><rect x="-13" y="-9" width="15" height="15" fill="#fff" stroke="#f8a8a8" stroke-width="1.500"/><path d="M-11-7h4v4h-4zM-5-7h4v4h-4zM-11-1h4v4h-4z" fill="#4e82d8"/><rect x="-3" y="-2" width="16" height="14" fill="#fff"/><path d="M-2-1h4v3h-4zM4-1h4v3h-4zM9-1h4v3h-4zM-2 4h4v3h-4zM4 4h4v3h-4zM9 4h4v3h-4zM-2 9h4v3h-4zM4 9h4v3h-4zM9 9h4v3h-4z" fill="#3e72c8"/></g>
<!-- row 3 -->
<g transform="translate(1226,674)"><path class="gr" d="M-13-13H-6Q-3 0-6 13H-13z"/><path class="pk" d="M13-13H6Q3 0 6 13H13z"/><path d="M0-13V13" stroke="#fff" stroke-width="2.400" stroke-dasharray="3 2"/></g>
<g transform="translate(1258,674)"><path class="pk" d="M-13-13H13V-10Q10-2 0-2Q-10-2-13-10z"/><path class="gr" d="M-13 13H13V10Q10 3 0 3Q-10 3-13 10z"/><path d="M-13 0H13" stroke="#fff" stroke-width="2"/></g>
<g transform="translate(1290,674)"><path class="gr" d="M-13-13H-6Q-3 0-6 13H-13z"/><path class="pk" d="M13-13H6Q3 0 6 13H13z"/><path d="M0-13V13" stroke="#fff" stroke-width="2"/></g>
<g transform="translate(1322,674)"><path class="gr" d="M-13-13Q-2-11-2-2H-13zM-13 2H-2V13H-6Q-13 12-13 2zM2 2H13V6Q11 13 2 13z"/><path class="pk" d="M2-2V-4Q4-12 13-13V-2z"/><path d="M-13 0H13M0-13V13" stroke="#fff" stroke-width="2"/></g>
<g transform="translate(1354,674)"><path class="pk" d="M2-2V-4Q4-12 13-13V-2z"/><path d="M-13 0H13M0-13V13" stroke="#fff" stroke-width="2"/></g>
<g transform="translate(1386,674)"><path class="gr" d="M-13-13Q-2-11-2-2H-13zM-13 2H-2V13H-6Q-13 12-13 2zM2 2H13V6Q11 13 2 13z"/><path class="pk" d="M2-2V-4Q4-12 13-13V-2z"/><path d="M-13 0H13M0-13V13" stroke="#fff" stroke-width="2"/></g>
<g transform="translate(1418,674)"><path class="pk" d="M2-2V-4Q4-12 13-13V-2z"/><path class="gr" d="M-13 13V5Q-11-1-5 2L2 13z"/><path d="M-13-13L13 13" stroke="#fff" stroke-width="2"/></g>
<!-- row 4 -->
<g transform="translate(1226,706)"><rect class="pk" x="-8" y="-8" width="16" height="16"/><rect x="-12" y="-12" width="24" height="24" fill="none" stroke="#fff" stroke-width="2" stroke-dasharray="2 2"/><path d="M-14-14h4v4h-4zM10-14h4v4h-4zM-14 10h4v4h-4zM10 10h4v4h-4z" fill="#fff"/></g>
<g transform="translate(1258,706)"><path class="pk" d="M-13-13H5V-8H-6V-3H3V2H-6V13H-13z"/><path class="gr" d="M7-13H13V13H-4V5H7z"/><path d="M3 5H9M6 2V8" stroke="#333" stroke-width="1.800"/></g>
<g transform="translate(1290,706)"><path class="gr" d="M-13-13H-3Q-6-5-3 0Q-6 6-3 13H-13L-6 0z"/><path d="M-1-13V13" stroke="#fff" stroke-width="2" stroke-dasharray="3 3"/><path d="M10-13Q2-8 6-2Q10 5 3 13" fill="none" stroke="#f8a8a8" stroke-width="2.400"/><path d="M1-5l5 2-4 2z" fill="#fff"/></g>
<g transform="translate(1322,706)" class="w"><path d="M0 0A3 3 0 0 1 4 3A6 6 0 0 1-5 4A8 8 0 0 1 4-8A11 11 0 0 1 9 8A12 12 0 0 1-10 6"/></g>
<g transform="translate(1354,706)"><path class="gr" d="M-12 0L-2-12 12-6 3 11z"/><path d="M-7-6L8 2M5-10L-5 6" stroke="#444" stroke-width="1.500"/><path d="M7-13H13V-7M-13 7V13H-7" fill="none" stroke="#fff" stroke-width="1.500"/></g>
<g transform="translate(1386,706)"><path d="M-11-11h5v5h-5zM-3-11h5v5h-5zM5-11h5v5h-5zM-11-3h5v5h-5zM-3-3h5v5h-5zM5-3h5v5h-5zM-11 5h5v5h-5zM-3 5h5v5h-5zM5 5h5v5h-5z" fill="#9fd0f8"/><path d="M8-13H13V-8M-13 8V13H-8" fill="none" stroke="#fff" stroke-width="1.500"/></g>
<g transform="translate(1418,706)"><path d="M-9-9h7v7h-7zM2-9h7v7H2zM-9 2h7v7h-7z" fill="#fff"/><path d="M2 2L12 8 7 9 10 13 8 14 5 10 3 12z" fill="#9fd0f8" stroke="#fff"/><path class="w" stroke-width="1.500" d="M-13-7V-13H-7M7-13H13V-7M13 7V13H7M-7 13H-13V7"/></g>
<!-- play row -->
<rect x="1210" y="723" width="224" height="24" fill="#a9a9a9"/>
<rect x="1211.500" y="724.500" width="20" height="18" fill="#f0a2a2" stroke="#888"/>
<path d="M1217 728L1227 733.500 1217 739z" fill="none" stroke="#111" stroke-width="2"/>
<rect x="1235.500" y="724.500" width="19" height="18" fill="#f0a2a2" stroke="#888"/>
<path d="M1240 731A5.500 5.500 0 1 1 1245 739" fill="none" stroke="#111" stroke-width="2.200"/><path d="M1237 731h6l-3 4z" fill="#111" transform="rotate(-15 1240 732)"/>
<text x="1259" y="739" fill="#e2e2e2" font-weight="bold" font-size="16" letter-spacing=".3">00:00:00</text>
<rect x="1400" y="725" width="32" height="17" fill="#333" stroke="#111"/><path d="M1402.500 727.500h27v12h-27zM1402.500 733.500h9M1411.500 727.500v12" fill="none" stroke="#fff" stroke-width="1.200"/>
<rect x="1216" y="864" width="206" height="8" rx="4" fill="#ababab"/>

<!-- status bar -->
<rect y="877" width="1440" height="20" fill="#3a3a3a"/>
<rect y="897" width="1440" height="3" fill="#0e0e0e"/>
<rect x="36" y="897" width="256" height="1" fill="#555"/>
<rect x="8.500" y="882.500" width="12" height="12" fill="#333" stroke="#d8d8d8" stroke-width="2"/>
<rect x="1421" y="882.500" width="12" height="12" fill="#333" stroke="#d8d8d8" stroke-width="2"/>
<g class="st"><text x="41" y="892" textLength="37" lengthAdjust="spacingAndGlyphs">CPlane</text><text x="118" y="892" textLength="44" lengthAdjust="spacingAndGlyphs">x 28.702</text><text x="203" y="892" textLength="45" lengthAdjust="spacingAndGlyphs">y 37.075</text><text x="303" y="892">z 0</text><text x="374" y="892" textLength="59" lengthAdjust="spacingAndGlyphs">Millimeters</text><text x="479" y="892" textLength="24" lengthAdjust="spacingAndGlyphs">Blue</text><text x="655" y="892" textLength="52" lengthAdjust="spacingAndGlyphs">Grid Snap</text><text x="728" y="892" textLength="31" lengthAdjust="spacingAndGlyphs">Ortho</text><text x="780" y="892" textLength="33" lengthAdjust="spacingAndGlyphs">Planar</text><text x="971" y="892" textLength="92" lengthAdjust="spacingAndGlyphs">Gumball (CPlane)</text><text x="1102" y="892" textLength="111" lengthAdjust="spacingAndGlyphs">Auto CPlane (Object)</text><text x="1238" y="892" textLength="78" lengthAdjust="spacingAndGlyphs">Record History</text></g>
<rect x="457.500" y="880.500" width="15" height="15" fill="#00f" stroke="#fff"/>
<rect x="824" y="879" width="52" height="18" rx="2" fill="#3f5a94"/><rect x="879" y="879" width="79" height="18" rx="2" fill="#3f5a94"/><rect x="1329" y="879" width="45" height="18" rx="2" fill="#3f5a94"/>
<g fill="#fff" font-weight="bold"><text x="832" y="892" textLength="36" lengthAdjust="spacingAndGlyphs">Osnap</text><text x="886" y="892" textLength="65" lengthAdjust="spacingAndGlyphs">SmartTrack</text><text x="1337" y="892" textLength="29" lengthAdjust="spacingAndGlyphs">Filter</text></g>
<rect x="1083" y="886" width="8" height="7" fill="#ddd"/><path d="M1084.500 886v-2a2.500 2.500 0 0 1 5 0v2" fill="none" stroke="#999"/>
</svg>
<script>
(function(){var e=document.getElementById('maria'),o='';
e.getAttribute('d').split('M').slice(1).forEach(function(s){
var a=s.replace(/[LZ]/g,' ').trim().split(/[\s,]+/).map(Number),P=[],i;
for(i=0;i<a.length;i+=2)P.push([a[i],a[i+1]]);
var n=P.length,g=function(i){return P[(i+n)%n]};
function c(i){var p=g(i-1),q=g(i),r=g(i+1),ax=q[0]-p[0],ay=q[1]-p[1],bx=r[0]-q[0],by=r[1]-q[1];
var v=(ax*bx+ay*by)/(Math.hypot(ax,ay)*Math.hypot(bx,by));return !(v>=0.05)}
function t(i){var p=g(i-1),r=g(i+1),x=r[0]-p[0],y=r[1]-p[1],l=Math.hypot(x,y)||1;return [x/l,y/l]}
o+='M'+P[0][0]+' '+P[0][1];
for(i=0;i<n;i++){var p=g(i),q=g(i+1),L=Math.hypot(q[0]-p[0],q[1]-p[1])/3,u=c(i)?[0,0]:t(i),w=c(i+1)?[0,0]:t(i+1);
o+='C'+(p[0]+u[0]*L).toFixed(1)+' '+(p[1]+u[1]*L).toFixed(1)+' '+(q[0]-w[0]*L).toFixed(1)+' '+(q[1]-w[1]*L).toFixed(1)+' '+q[0]+' '+q[1];}
o+='Z';});
e.setAttribute('d',o);})();
</script>
</body></html>
